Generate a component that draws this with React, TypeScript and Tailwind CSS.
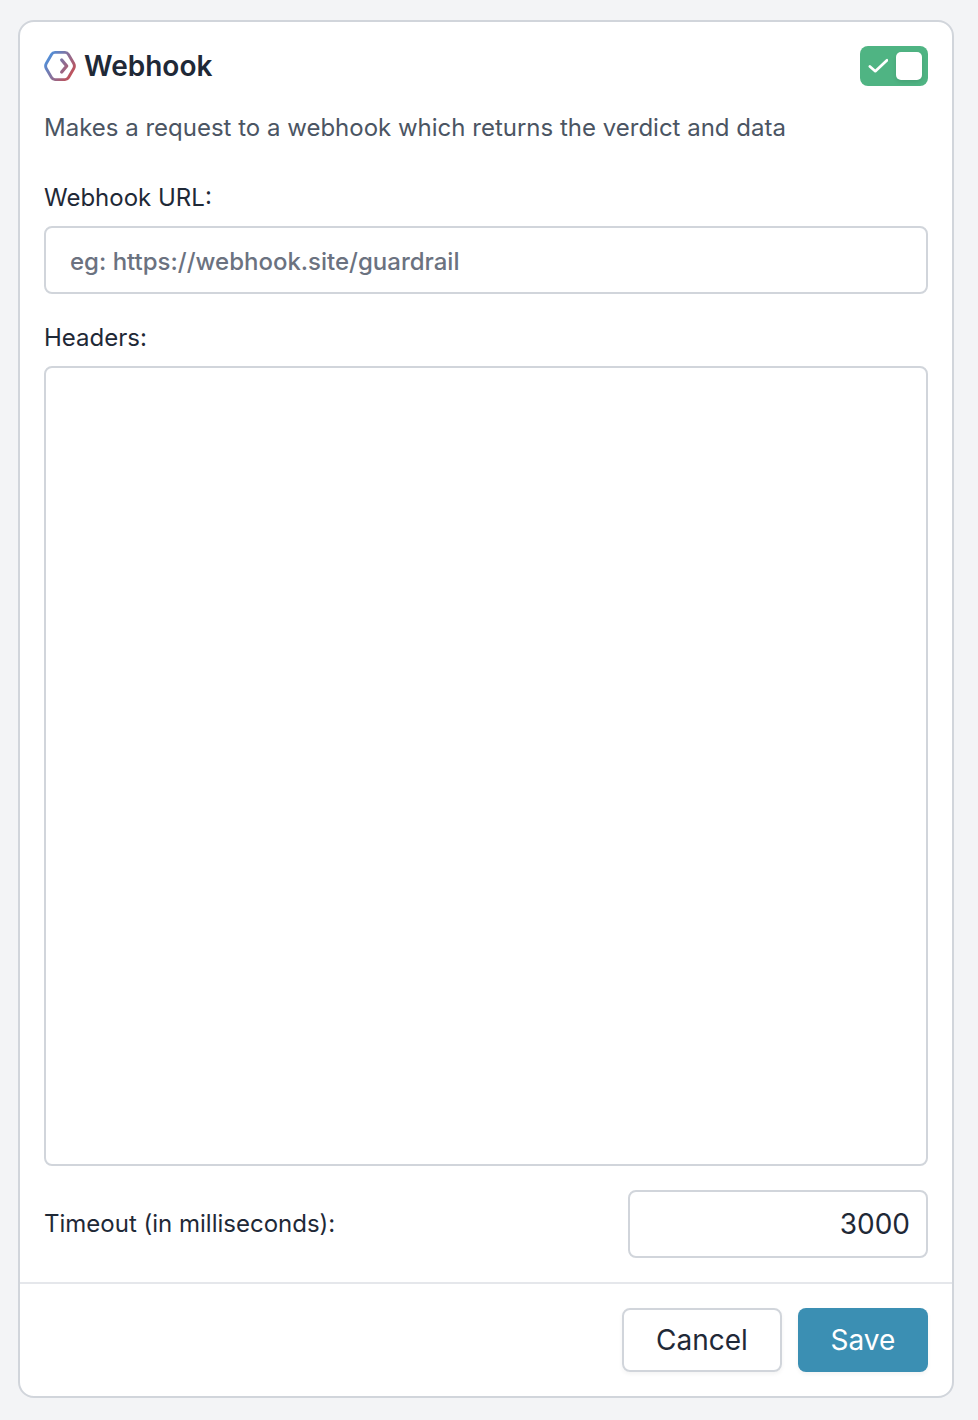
export default function App() {
  return (
    <div className="h-[1420px] w-[978px] bg-[#f3f4f6] pt-5 pl-[18px] font-['Inter',sans-serif] text-[#1f2937]">
      <section className="flex h-[1378px] w-[936px] flex-col rounded-2xl border-2 border-[#d1d5db] bg-white">
        <div className="flex flex-col px-6 pt-6">
          <header className="flex h-10 items-center justify-between">
            <div className="flex items-center gap-2">
              <svg className="size-8" viewBox="0 0 32 32" fill="none" strokeLinecap="round" strokeLinejoin="round">
                <defs>
                  <linearGradient id="mark" x1="3" y1="7" x2="29" y2="25" gradientUnits="userSpaceOnUse">
                    <stop stopColor="#4e90dc" />
                    <stop offset="1" stopColor="#c44f55" />
                  </linearGradient>
                </defs>
                <path d="M11 2.4H21Q23.300 2.400 24.500 4.400L29.600 13.200Q31.200 16 29.600 18.800L24.500 27.600Q23.300 29.600 21 29.600H11Q8.700 29.600 7.500 27.600L2.400 18.800Q.8 16 2.400 13.200L7.500 4.400Q8.700 2.400 11 2.400Z" stroke="url(#mark)" strokeWidth="2.900" />
                <path d="M17.700 10L22.700 16L17.700 22" stroke="url(#mark)" strokeWidth="3.300" />
              </svg>
              <h1 className="text-[28px] leading-10 font-semibold">Webhook</h1>
            </div>
            <button aria-label="Enabled" className="flex h-10 w-[68px] items-center justify-between rounded-lg bg-[#4fb483] pr-1.5 pl-2">
              <svg className="h-5 w-5" viewBox="0 0 20 20" fill="none" stroke="white" strokeWidth="2.700" strokeLinecap="round" strokeLinejoin="round">
                <path d="M1.900 10.500L7.300 15.200L19 4.300" />
              </svg>
              <span className="h-7 w-[26px] rounded-[5px] bg-white shadow-[0_2px_4px_rgba(0,0,0,0.1)]" />
            </button>
          </header>
          <p className="mt-6 text-2xl leading-9 text-[#4b5563]">Makes a request to a webhook which returns the verdict and data</p>
          <label className="mt-[34px] text-2xl leading-9">Webhook URL:</label>
          <input className="mt-2.5 h-[68px] rounded-lg border-2 border-[#d1d5db] px-6 pt-0.5 text-2xl font-medium placeholder:text-[#6b7280]" placeholder="eg: https://webhook.site/guardrail" />
          <label className="mt-[26px] text-2xl leading-9">Headers:</label>
          <textarea aria-label="Headers" className="mt-2.5 h-[800px] resize-none rounded-lg border-2 border-[#d1d5db] p-4" />
          <div className="mt-6 flex items-center justify-between">
            <label className="text-2xl">Timeout (in milliseconds):</label>
            <input aria-label="Timeout" className="h-[68px] w-[300px] rounded-lg border-2 border-[#d1d5db] px-4 text-right text-[28px]" defaultValue="3000" />
          </div>
        </div>
        <footer className="mt-6 flex justify-end gap-4 border-t-2 border-[#e5e7eb] px-6 pt-6 text-[28px]">
          <button className="h-16 w-40 rounded-lg border-2 border-[#d1d5db] shadow-[0_2px_4px_rgba(0,0,0,0.05)]">Cancel</button>
          <button className="h-16 w-[130px] rounded-lg bg-[#3b8fb3] text-white shadow-[0_2px_4px_rgba(0,0,0,0.05)]">Save</button>
        </footer>
      </section>
    </div>
  );
}
